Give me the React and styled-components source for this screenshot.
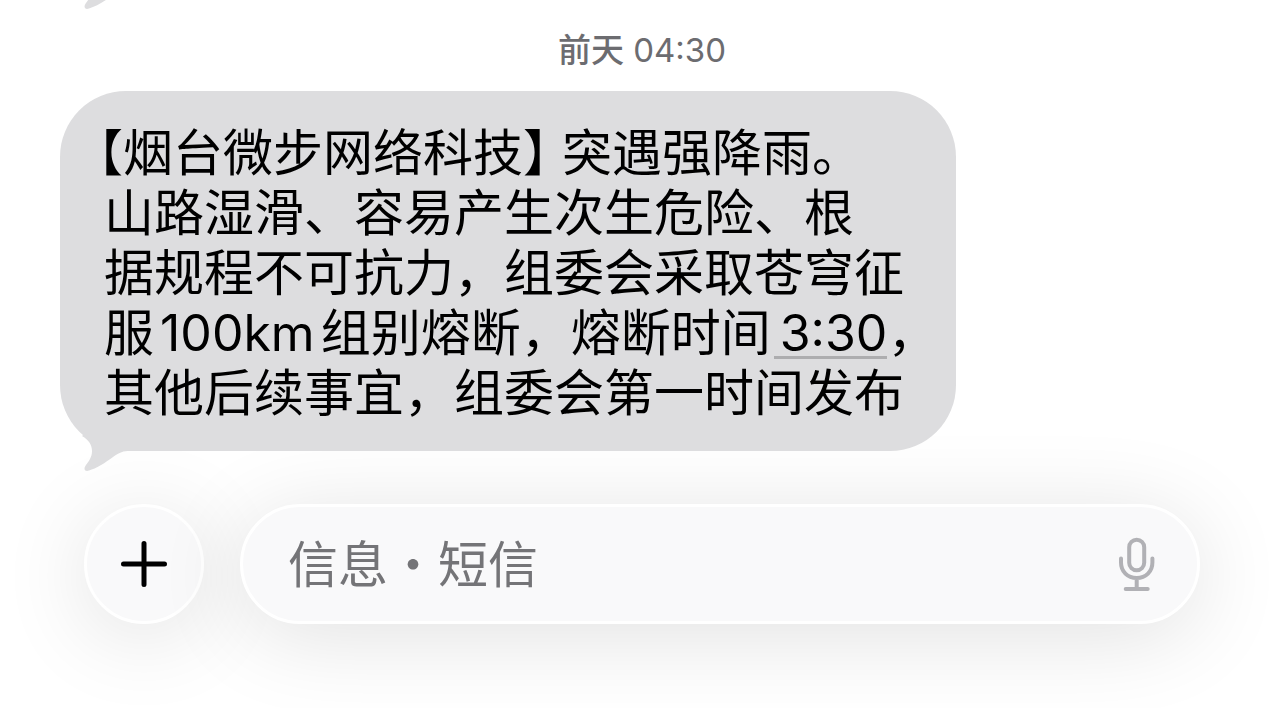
import React from 'react'
import styled, { createGlobalStyle } from 'styled-components'

const COLORS = {
  bubble: '#dddddf',
  text: '#000',
  muted: '#6c6c70',
  placeholder: '#747477',
  icon: '#b1b1b5',
  field: '#f9f9fa',
}

const GlobalStyle = createGlobalStyle`
  *,
  *::before,
  *::after {
    box-sizing: border-box;
  }

  body {
    margin: 0;
    background: #fff;
    font-family: Inter, 'Noto Sans CJK SC', sans-serif;
  }
`

const Page = styled.main`
  display: flex;
  flex-direction: column;
  min-height: 100vh;
  overflow: hidden;
  color: ${COLORS.text};
`

const Thread = styled.section`
  display: flex;
  flex: 1;
  flex-direction: column;
  align-items: flex-start;
  padding: 0 60px;
`

const PreviousTail = styled.svg`
  display: block;
  width: 80px;
  height: 10px;
  fill: ${COLORS.bubble};
`

const Timestamp = styled.time`
  align-self: center;
  margin: 20px 0 21px;
  color: ${COLORS.muted};
  font-size: 33px;
  line-height: 40px;

  .day {
    font-weight: 500;
  }
`

const Bubble = styled.article`
  position: relative;
  padding: 32px 42px 28px 44px;
  border-radius: 66px;
  background: ${COLORS.bubble};
  font-size: 50px;
  line-height: 60px;

  .tail {
    position: absolute;
    bottom: -22px;
    left: 0;
    width: 80px;
    height: 44px;
    fill: ${COLORS.bubble};
  }
`

const Line = styled.span`
  display: block;
  min-width: 810px;
  white-space: nowrap;
`

const HalfWidth = styled.span`
  margin-left: ${({ $hanging }) => ($hanging ? '-6px' : '0')};
  font-feature-settings: 'halt';
`

const Latin = styled.span`
  margin: 0 6px;
`

const TimeLink = styled.a`
  display: inline-block;
  margin-left: 3px;
  padding-left: 6px;
  border-bottom: 3px solid #adadaf;
  color: inherit;
  line-height: 46px;
  text-decoration: none;
`

const Composer = styled.form`
  display: flex;
  gap: 36px;
  padding: 52px 84px 84px;
`

const glass = `
  border: 3px solid #fff;
  border-radius: 60px;
  background: ${COLORS.field};
  box-shadow: 0 12px 90px rgba(0, 0, 0, 0.12);
`

const AddButton = styled.button`
  display: flex;
  flex: none;
  align-items: center;
  justify-content: center;
  width: 120px;
  height: 120px;
  padding: 0;
  color: ${COLORS.text};
  ${glass}
`

const Field = styled.div`
  display: flex;
  flex: 1;
  align-items: center;
  height: 120px;
  padding: 0 40px 0 45px;
  ${glass}

  input {
    flex: 1;
    min-width: 0;
    height: 80px;
    padding: 0 0 6px;
    border: 0;
    outline: 0;
    background: none;
    color: ${COLORS.text};
    font-family: 'Noto Sans CJK SC', sans-serif;
    font-size: 50px;

    &::placeholder {
      color: ${COLORS.placeholder};
      opacity: 1;
    }
  }
`

const MicButton = styled.button`
  display: flex;
  padding: 0;
  border: 0;
  background: none;
  color: ${COLORS.icon};
`

const TAIL_PATH =
  'M22 7C29 11 32 16 32 22C32 28 29 32 26 36C23 40 25 43 29 41.5C36 39.5 45 34 53 28C60 23 63 22 70 22L80 22V0H30Z'

function PlusIcon() {
  return (
    <svg width="48" height="48" viewBox="0 0 48 48" fill="none" aria-hidden="true">
      <path d="M24 3.5V44.5M3.5 24H44.5" stroke="currentColor" strokeWidth="5" strokeLinecap="round" />
    </svg>
  )
}

function MicIcon() {
  return (
    <svg width="40" height="56" viewBox="0 0 40 56" fill="none" aria-hidden="true">
      <g stroke="currentColor" strokeWidth="4" strokeLinecap="round">
        <rect x="12.2" y="3.7" width="15" height="30.6" rx="7.5" />
        <path d="M4 22.5V26.5C4 35.5 10.5 42 19.7 42S35.4 35.5 35.4 26.5V22.5M19.7 42V53M8.7 53H30.7" />
      </g>
    </svg>
  )
}

export default function App() {
  return (
    <>
      <GlobalStyle />
      <Page>
        <Thread>
          <PreviousTail viewBox="0 33 80 10" aria-hidden="true">
            <path d={TAIL_PATH} />
          </PreviousTail>

          <Timestamp>
            <span className="day">前天</span> 04:30
          </Timestamp>

          <Bubble lang="zh-CN">
            <Line>
              <HalfWidth $hanging>【</HalfWidth>
              烟台微步网络科技
              <HalfWidth>】</HalfWidth> 突遇强降雨。
            </Line>
            <Line>山路湿滑、容易产生次生危险、根</Line>
            <Line>据规程不可抗力，组委会采取苍穹征</Line>
            <Line>
              服<Latin>100km</Latin>组别熔断，熔断时间
              <TimeLink href="#time">3:30</TimeLink>
              <HalfWidth>，</HalfWidth>
            </Line>
            <Line>其他后续事宜，组委会第一时间发布</Line>
            <svg className="tail" viewBox="0 0 80 44" aria-hidden="true">
              <path d={TAIL_PATH} />
            </svg>
          </Bubble>
        </Thread>

        <Composer onSubmit={(e) => e.preventDefault()}>
          <AddButton type="button" aria-label="添加">
            <PlusIcon />
          </AddButton>
          <Field>
            <input type="text" aria-label="信息" placeholder="信息•短信" />
            <MicButton type="button" aria-label="听写">
              <MicIcon />
            </MicButton>
          </Field>
        </Composer>
      </Page>
    </>
  )
}
